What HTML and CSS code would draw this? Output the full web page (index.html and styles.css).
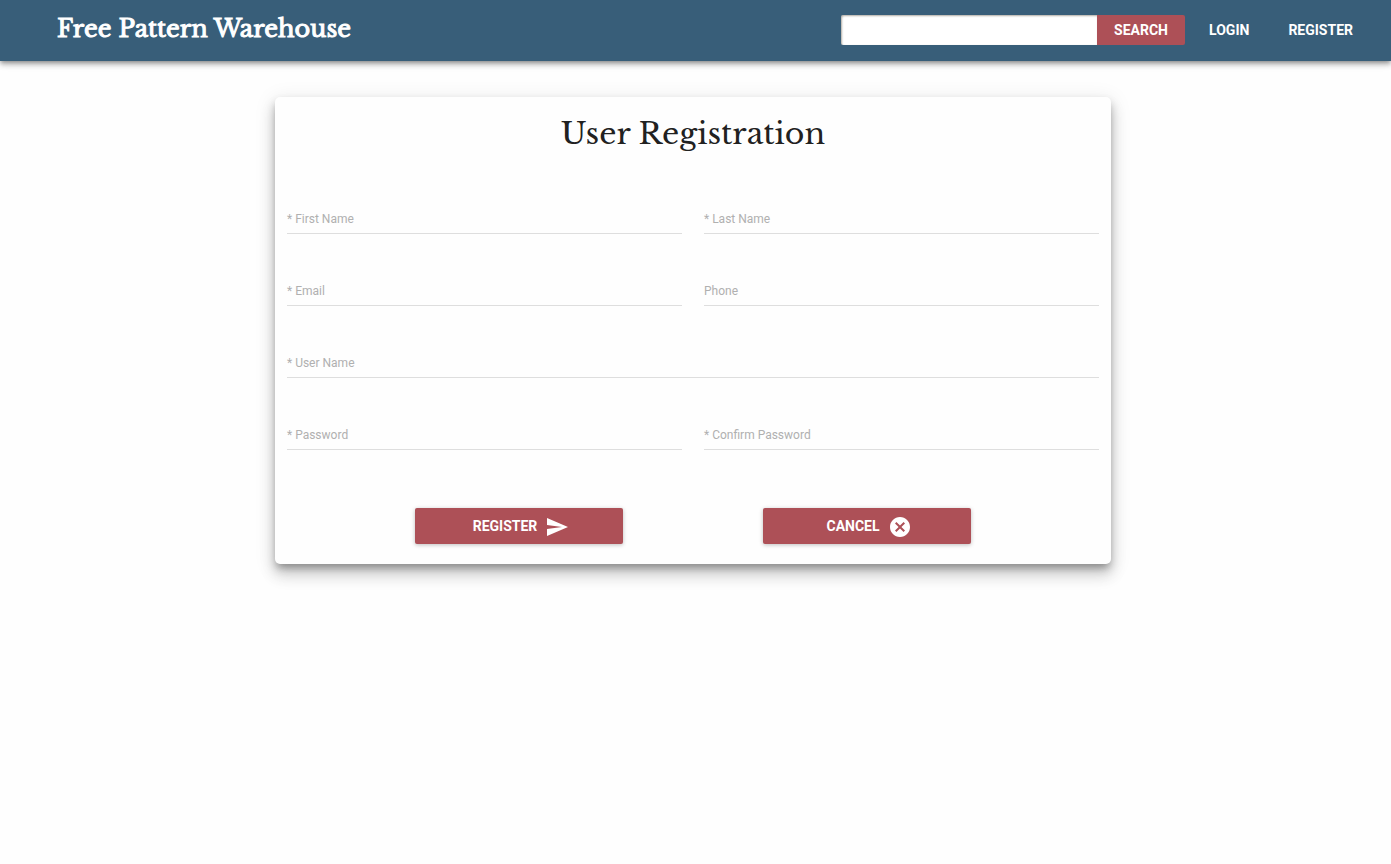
FILE: index.html
```
<!DOCTYPE html>
<html lang="en">
<head>
<meta charset="utf-8">
<title>Free Pattern Warehouse</title>
<link rel="stylesheet" href="styles.css">
</head>
<body>
<header class="toolbar">
  <a class="brand" href="#">Free Pattern Warehouse</a>
  <form class="search" role="search">
    <input class="search-input" type="search" aria-label="Search patterns">
    <button class="search-button" type="submit">SEARCH</button>
  </form>
  <nav class="nav">
    <a href="#">LOGIN</a>
    <a href="#">REGISTER</a>
  </nav>
</header>
<main class="page">
  <form class="card">
    <h1 class="title">User Registration</h1>
    <div class="fields">
      <div class="field"><input id="first" type="text"><label for="first">* First Name</label></div>
      <div class="field"><input id="last" type="text"><label for="last">* Last Name</label></div>
      <div class="field"><input id="email" type="email"><label for="email">* Email</label></div>
      <div class="field"><input id="phone" type="tel"><label for="phone">Phone</label></div>
      <div class="field wide"><input id="user" type="text"><label for="user">* User Name</label></div>
      <div class="field"><input id="password" type="password"><label for="password">* Password</label></div>
      <div class="field"><input id="confirm" type="password"><label for="confirm">* Confirm Password</label></div>
    </div>
    <div class="actions">
      <button class="action" type="submit">REGISTER
        <svg viewBox="0 0 24 24" aria-hidden="true"><path d="M2.01 21L23 12 2.01 3 2 10l15 2-15 2z"/></svg>
      </button>
      <button class="action" type="button">CANCEL
        <svg viewBox="0 0 24 24" aria-hidden="true"><path d="M12 2C6.47 2 2 6.47 2 12s4.47 10 10 10 10-4.47 10-10S17.53 2 12 2zm5 13.59L15.59 17 12 13.41 8.41 17 7 15.59 10.59 12 7 8.41 8.41 7 12 10.59 15.59 7 17 8.41 13.41 12 17 15.59z"/></svg>
      </button>
    </div>
  </form>
</main>
</body>
</html>
```
FILE: styles.css
```
* { box-sizing: border-box; }

body {
  min-height: 100vh;
  margin: 0;
  background: #fefefe;
  color: #212121;
  font-family: Roboto, "Liberation Sans", sans-serif;
}

button, input { font: inherit; border: 0; }
button { cursor: pointer; }

.toolbar {
  display: flex;
  align-items: center;
  height: 61px;
  padding: 0 38px 2px 57px;
  background: #385e79;
  color: #fff;
  box-shadow: 0 2px 4px -1px rgba(0, 0, 0, .3), 0 4px 5px rgba(0, 0, 0, .18), 0 1px 10px rgba(0, 0, 0, .12);
}

.brand {
  margin-right: auto;
  padding-bottom: 2px;
  color: inherit;
  font: 400 24px/32px "Libre Baskerville", "Liberation Serif", serif;
  -webkit-text-stroke: 1px currentColor;
  text-decoration: none;
  white-space: nowrap;
}

.search { display: flex; height: 30px; }

.search-input {
  width: 256px;
  padding: 0 8px;
  border-radius: 2px 0 0 2px;
  background: #fff;
  box-shadow: inset 1px 1px 2px rgba(60, 50, 30, .4);
}

.search-button {
  width: 88px;
  padding: 0;
  border-radius: 0 2px 2px 0;
  background: #ad5057;
  color: #fff;
  font-size: 14px;
  font-weight: 700;
}

.nav {
  display: flex;
  gap: 39px;
  margin-left: 24px;
  font-size: 14px;
  font-weight: 700;
}

.nav a { color: inherit; text-decoration: none; }

.page {
  display: grid;
  grid-template-columns: 275fr 836fr 280fr;
  padding: 36px 0;
}

.card {
  grid-column: 2;
  padding-bottom: 20px;
  border-radius: 5px;
  background: #fefefe;
  box-shadow: 0 6px 7px -4px rgba(0, 0, 0, .2), 0 11px 15px 1px rgba(0, 0, 0, .14), 0 4px 20px 3px rgba(0, 0, 0, .08), 0 5px 8px rgba(0, 0, 0, .18);
}

.title {
  margin: 0;
  padding: 17px 0 43px;
  font: 400 30px/40px "Libre Baskerville", "Liberation Serif", serif;
  text-align: center;
}

.fields {
  display: grid;
  grid-template-columns: 1fr 1fr;
  gap: 35px 22px;
  padding: 0 12px;
}

.field { position: relative; height: 37px; }
.wide { grid-column: 1 / -1; }

.field input {
  width: 100%;
  height: 37px;
  padding: 8px 0 0;
  border-bottom: 1px solid #dedede;
  background: transparent;
  font-size: 14px;
}

.field label {
  position: absolute;
  top: 14px;
  left: 0;
  color: #b0b0b0;
  font-size: 12px;
  line-height: 16px;
  pointer-events: none;
}

.actions {
  display: flex;
  justify-content: space-evenly;
  padding-top: 58px;
}

.action {
  display: flex;
  align-items: center;
  justify-content: center;
  gap: 8px;
  width: 208px;
  height: 36px;
  padding: 0 0 0 4px;
  border-radius: 2px;
  background: #ad5057;
  color: #fff;
  box-shadow: 0 1px 4px rgba(0, 0, 0, .26);
  font-size: 14px;
  font-weight: 700;
}

.action svg { width: 24px; height: 24px; margin-top: 2px; fill: currentColor; }
```
